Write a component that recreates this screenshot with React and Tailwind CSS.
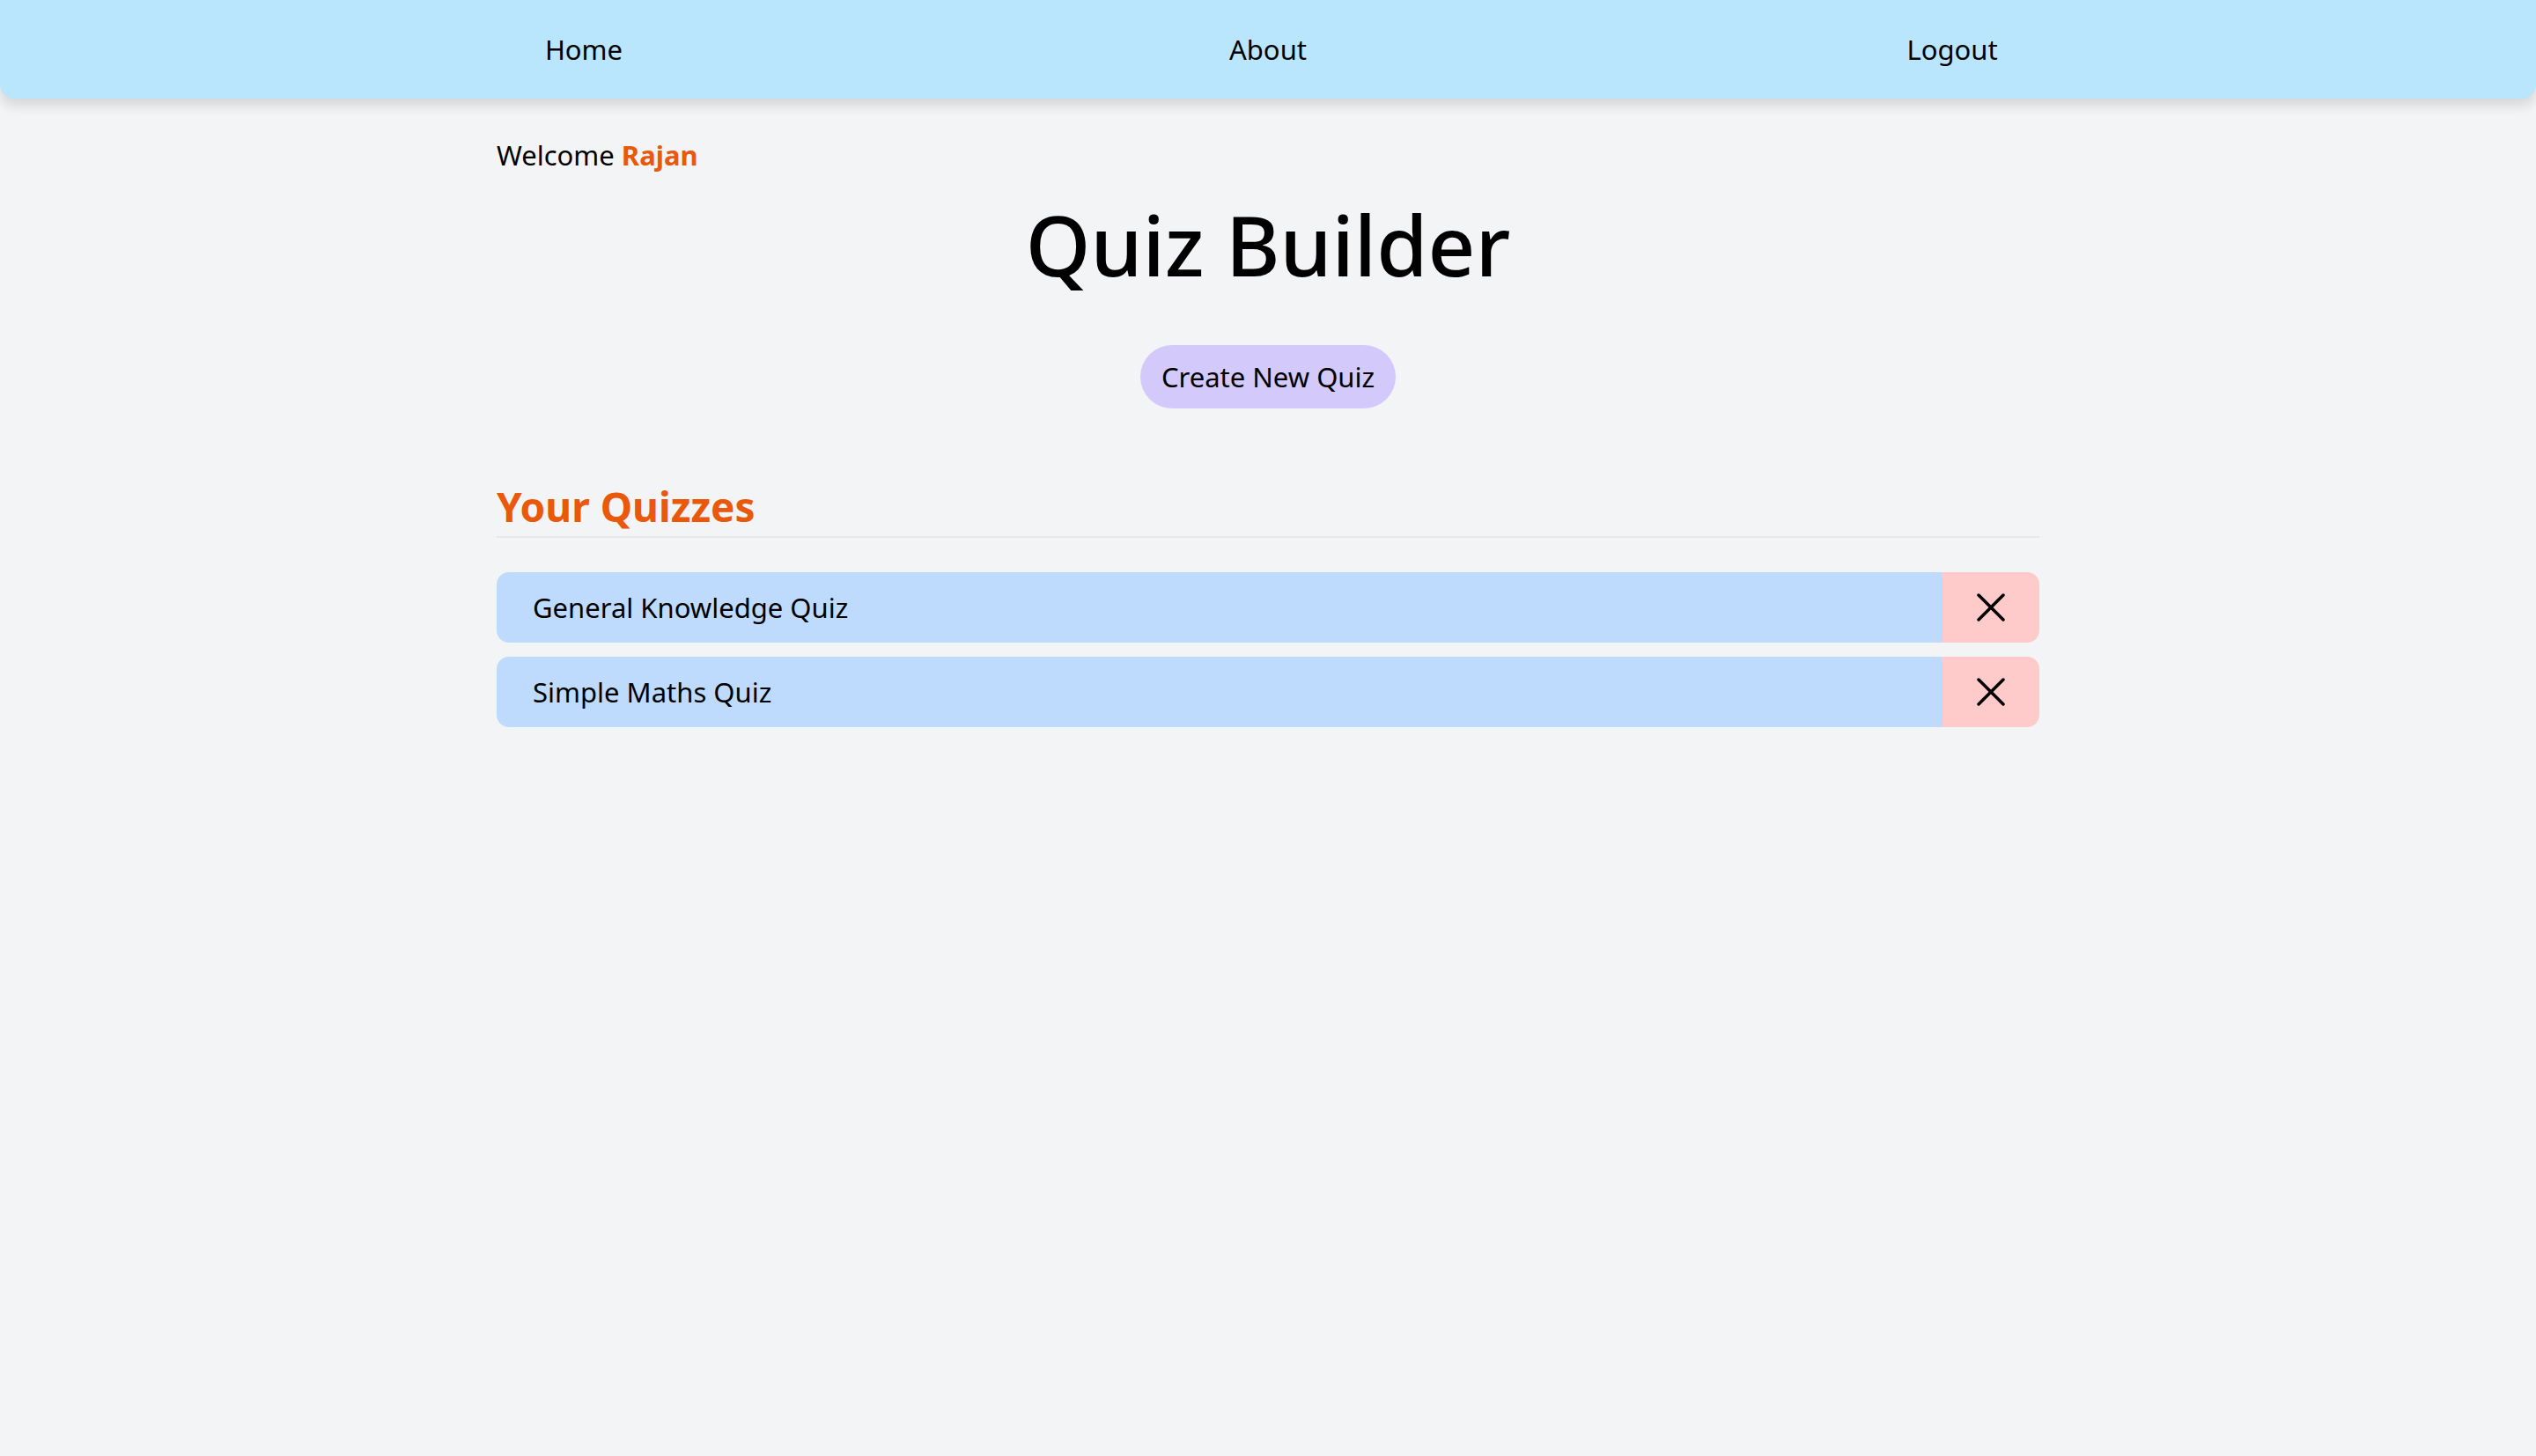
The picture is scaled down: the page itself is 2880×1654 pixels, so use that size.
const quizzes = [
  { id: 1, title: 'General Knowledge Quiz' },
  { id: 2, title: 'Simple Maths Quiz' },
];

function CloseIcon() {
  return (
    <svg width="32" height="32" viewBox="0 0 32 32" fill="none" stroke="currentColor" strokeWidth="3.5" strokeLinecap="round">
      <path d="M2 2 30 30" />
      <path d="M30 2 2 30" />
    </svg>
  );
}

function Navbar() {
  return (
    <nav className="h-[112px] bg-[#b9e6fc] rounded-b-[16px] shadow-[0_8px_14px_rgba(0,0,0,0.12)]">
      <ul className="w-[2331px] h-full mx-auto grid grid-cols-3 items-center text-[31px] text-black">
        <li className="text-center">Home</li>
        <li className="text-center">About</li>
        <li className="text-center">Logout</li>
      </ul>
    </nav>
  );
}

export default function App() {
  return (
    <div className="min-h-screen bg-[#f3f4f6] font-['Noto_Sans',sans-serif] text-black">
      <Navbar />

      <main className="w-[1752px] mx-auto pt-[40px]">
        <p className="text-[31px] leading-[48px]">
          Welcome <span className="font-bold text-[#ea580c]">Rajan</span>
        </p>

        <h1 className="mt-[28px] text-center text-[94px] leading-[100px] font-medium">Quiz Builder</h1>

        <div className="mt-[64px] flex justify-center">
          <button className="h-[72px] px-[24px] rounded-full bg-[#d3c9fb] text-[31px]">Create New Quiz</button>
        </div>

        <h2 className="mt-[83px] pb-[6px] border-b-2 border-[#e5e7eb] text-[46px] leading-[56px] font-bold text-[#ea580c]">
          Your Quizzes
        </h2>

        <ul className="mt-[39px] flex flex-col gap-[16px]">
          {quizzes.map(q => (
            <li key={q.id} className="h-[80px] flex rounded-[14px] overflow-hidden">
              <div className="flex-1 flex items-center pl-[41px] bg-[#bedbfd] text-[31px]">{q.title}</div>
              <button className="w-[110px] flex items-center justify-center bg-[#fecaca]">
                <CloseIcon />
              </button>
            </li>
          ))}
        </ul>
      </main>
    </div>
  );
}
